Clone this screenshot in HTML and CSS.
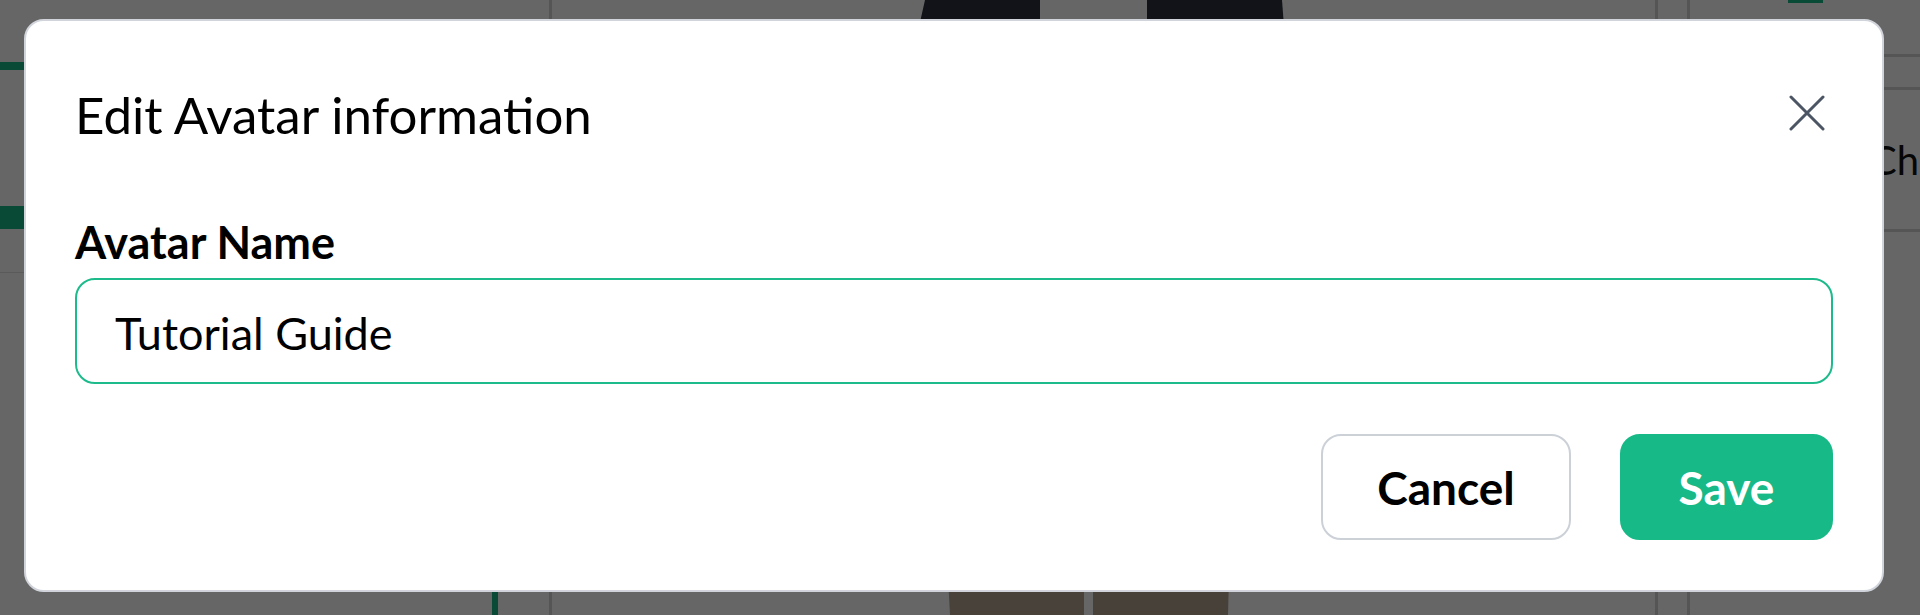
FILE: index.html
```html
<!DOCTYPE html>
<html lang="en">
<head>
  <meta charset="UTF-8">
  <title>Edit Avatar information</title>
  <link rel="stylesheet" href="styles.css">
</head>
<body>
  <!-- page behind the dialog -->
  <div class="app">
    <aside class="sidebar">
      <div class="sidebar-progress"></div>
      <div class="sidebar-tab"></div>
      <div class="sidebar-divider"></div>
      <div class="sidebar-rail"></div>
    </aside>

    <main class="stage">
      <!-- avatar preview -->
      <svg class="stage-figure" width="1103" height="615" viewBox="0 0 1103 615">
        <path d="M373 0H488V40H364Z" fill="#2b303e"/>
        <path d="M595 0H730L733 40H595Z" fill="#2b303e"/>
        <path d="M396 578H532V615H398Z" fill="#b7a693"/>
        <path d="M541 578H677L676 615H541Z" fill="#b5a490"/>
      </svg>
    </main>

    <div class="gutter"></div>

    <section class="panel">
      <div class="panel-row panel-row-top"><span class="panel-chip"></span></div>
      <div class="panel-row panel-row-thin"></div>
      <div class="panel-row panel-row-text">Ch</div>
    </section>
  </div>

  <!-- edit dialog -->
  <div class="backdrop"></div>
  <div class="modal">
    <div class="modal-header">
      <h2 class="modal-title">Edit Avatar information</h2>
      <button class="modal-close" type="button" aria-label="Close">
        <svg width="36" height="36" viewBox="0 0 36 36">
          <path d="M2 2L34 34M34 2L2 34" stroke="#4b5563" stroke-width="3" stroke-linecap="round" fill="none"/>
        </svg>
      </button>
    </div>

    <div class="field">
      <label class="field-label" for="avatarName">Avatar Name</label>
      <input class="field-input" id="avatarName" type="text" value="Tutorial Guide">
    </div>

    <div class="modal-actions">
      <button class="btn btn-cancel" type="button">Cancel</button>
      <button class="btn btn-save" type="button">Save</button>
    </div>
  </div>
</body>
</html>
```

FILE: styles.css
```css
html, body {
  margin: 0;
  padding: 0;
  height: 100%;
  overflow: hidden;
}
body {
  font-family: "Lato", "Liberation Sans", sans-serif;
  background: #fff;
  color: #111;
}

/* page behind the dialog */
.app {
  display: flex;
  height: 100vh;
}
.sidebar {
  flex: none;
  width: 549px;
  border-right: 3px solid #d4d4d4;
  display: flex;
  flex-direction: column;
}
.sidebar-progress {
  margin-top: 62px;
  height: 8px;
  background: #17b987;
}
.sidebar-tab {
  margin-top: 136px;
  height: 23px;
  background: #17b987;
}
.sidebar-divider {
  margin-top: 43px;
  border-top: 1px solid #e2e2e2;
}
.sidebar-rail {
  margin-top: auto;
  margin-left: 492px;
  width: 6px;
  height: 40px;
  background: #17b987;
}
.stage {
  flex: none;
  width: 1103px;
  overflow: hidden;
}
.stage-figure {
  display: block;
}
.gutter {
  flex: none;
  width: 29px;
  border-left: 3px solid #d4d4d4;
  border-right: 3px solid #d4d4d4;
}
.panel {
  flex: 1;
  min-width: 0;
  overflow: hidden;
  display: flex;
  flex-direction: column;
}
.panel-row {
  border-bottom: 3px solid #d4d4d4;
  box-sizing: border-box;
}
.panel-row-top {
  height: 57px;
  padding-left: 98px;
}
.panel-chip {
  display: block;
  width: 35px;
  height: 3px;
  background: #17b987;
}
.panel-row-thin {
  height: 33px;
}
.panel-row-text {
  height: 142px;
  display: flex;
  align-items: center;
  padding-left: 180px;
  font-size: 40px;
  white-space: nowrap;
}

/* dialog */
.backdrop {
  position: fixed;
  inset: 0;
  background: rgba(0, 0, 0, 0.6);
}
.modal {
  position: fixed;
  left: 24px;
  top: 19px;
  width: 1860px;
  box-sizing: border-box;
  padding: 64px 49px 50px 49px;
  background: #fff;
  border: 2px solid #d1d5db;
  border-radius: 20px;
}
.modal-header {
  display: flex;
  justify-content: space-between;
  align-items: center;
}
.modal-title {
  margin: 0;
  font-size: 51px;
  font-weight: 400;
  line-height: 60px;
  color: #000;
}
.modal-close {
  margin: -4px 8px 0 0;
  padding: 0;
  border: none;
  background: none;
  display: flex;
  cursor: pointer;
}

.field {
  margin-top: 72px;
}
.field-label {
  display: block;
  margin-bottom: 11px;
  font-size: 45px;
  font-weight: 700;
  line-height: 50px;
  color: #000;
}
.field-input {
  display: block;
  width: 100%;
  height: 106px;
  box-sizing: border-box;
  padding: 4px 38px 0;
  border: 2px solid #1dbb8b;
  border-radius: 20px;
  font-family: inherit;
  font-size: 45px;
  color: #000;
  outline: none;
}

.modal-actions {
  margin-top: 50px;
  display: flex;
  justify-content: flex-end;
  gap: 49px;
}
.btn {
  height: 106px;
  border-radius: 20px;
  font-family: inherit;
  font-size: 46px;
  font-weight: 700;
  cursor: pointer;
}
.btn-cancel {
  width: 250px;
  background: #fff;
  border: 2px solid #ccd1d8;
  color: #000;
}
.btn-save {
  width: 213px;
  background: #17b987;
  border: 2px solid #17b987;
  color: #fff;
}
```
